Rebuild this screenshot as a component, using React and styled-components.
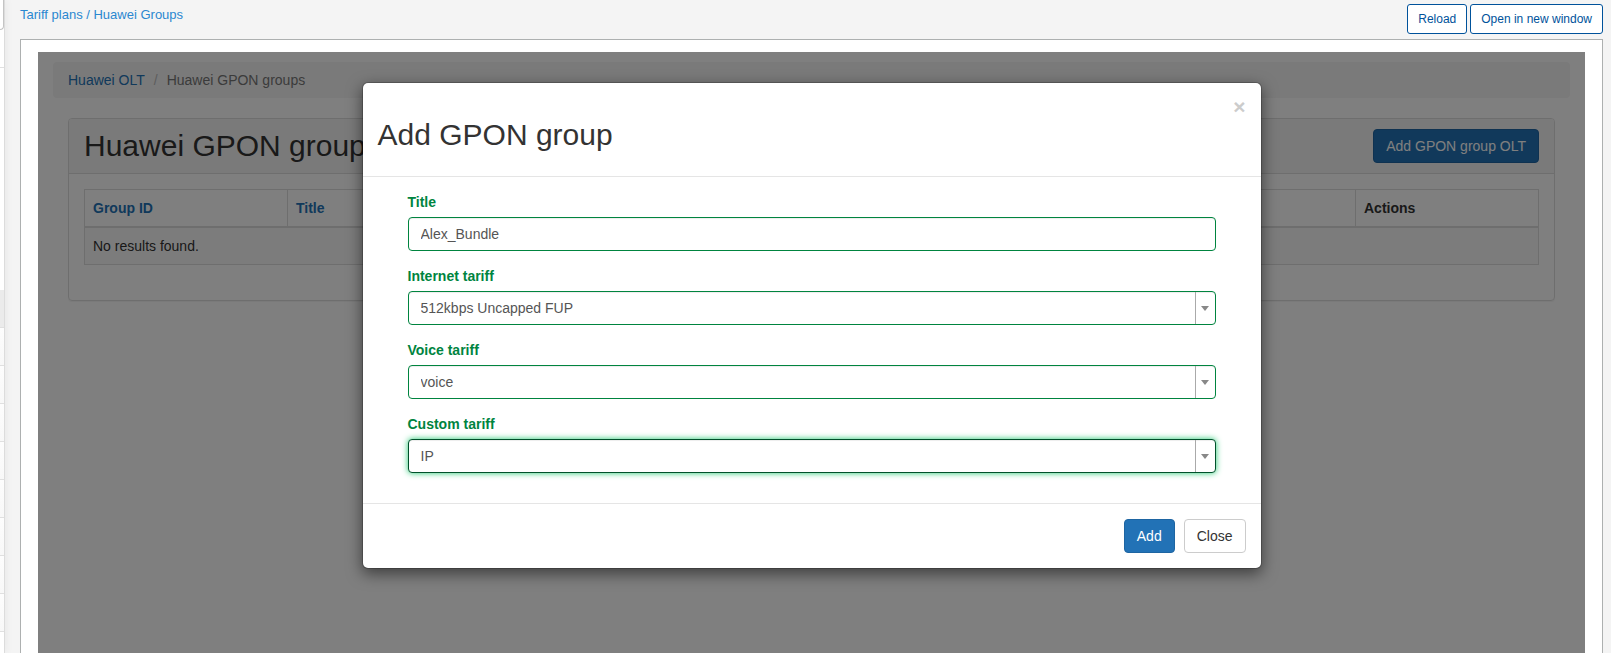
import React from "react";
import styled, { createGlobalStyle, css } from "styled-components";

const GlobalStyle = createGlobalStyle`
  *, *::before, *::after { box-sizing: border-box; }
  html, body { margin: 0; padding: 0; }
  body {
    background: #f4f4f4;
    color: #333;
    font-family: "Liberation Sans", Arial, sans-serif;
    font-size: 14px;
    line-height: 20px;
  }
  button, input, select { font-family: inherit; }
`;

const Shell = styled.div`
  display: flex;
  min-height: 100vh;
`;

const Sidebar = styled.aside`
  flex: none;
  width: 5px;
  overflow: hidden;
  background: #fff;
  border-right: 1px solid #dcdcdc;
  box-shadow: 0 0 8px rgba(0, 0, 0, 0.08);
`;

const SearchBox = styled.div`
  height: 30px;
  border: solid #c4c4c4;
  border-width: 0 1px 1px 0;
  border-radius: 0 0 4px 0;
`;

const SidebarSection = styled.div`
  height: ${(p) => p.$height}px;
  border-bottom: ${(p) => (p.$line ? "1px solid #e0e0e0" : "0")};
`;

const SidebarItem = styled.div`
  height: 38px;
  border-bottom: 1px solid #e0e0e0;
  background: ${(p) => (p.$active ? "#ebebeb" : "linear-gradient(#fdfdfd, #f8f8f8)")};
`;

const Main = styled.main`
  flex: 1;
  min-width: 0;
  display: flex;
  flex-direction: column;
  padding: 0 8px 0 15px;
`;

const TopBar = styled.header`
  display: flex;
  justify-content: space-between;
  padding: 4px 0 5px;
`;

const Trail = styled.nav`
  color: #2a87d0;
  font-size: 13px;
  line-height: 22px;
  a { color: inherit; text-decoration: none; }
`;

const TopActions = styled.div`
  display: flex;
  gap: 3px;
`;

const OutlineButton = styled.button`
  height: 30px;
  padding: 0 10px;
  border: 1px solid #00529b;
  border-radius: 3px;
  background: #fff;
  color: #00529b;
  font-size: 12px;
  line-height: 18px;
`;

const Frame = styled.section`
  flex: 1;
  display: flex;
  padding: 12px 17px 0;
  border: 1px solid #adb0b0;
  border-bottom: 0;
  background: #fff;
`;

const Stack = styled.div`
  flex: 1;
  min-width: 0;
  display: grid;
  grid-template-columns: minmax(0, 1fr);
  > * { grid-area: 1 / 1; }
`;

const Page = styled.div`
  padding: 10px 15px;
`;

const Breadcrumb = styled.ol`
  display: flex;
  margin: 0 0 20px;
  padding: 8px 15px;
  border-radius: 4px;
  background: #f5f5f5;
  color: #777;
  list-style: none;
  a { color: #2272b6; text-decoration: none; }
  li + li::before { content: "/"; padding: 0 9px; color: #bbb; }
`;

const Panel = styled.section`
  margin: 0 15px;
  border: 1px solid #ddd;
  border-radius: 4px;
  box-shadow: 0 1px 1px rgba(0, 0, 0, 0.05);
`;

const PanelHeader = styled.div`
  display: flex;
  align-items: flex-start;
  justify-content: space-between;
  padding: 10px 15px;
  border-bottom: 1px solid #ddd;
  border-radius: 3px 3px 0 0;
  background: #f5f5f5;
`;

const Heading = styled.h1`
  margin: 0;
  font-size: 30px;
  font-weight: 400;
  line-height: 33px;
`;

const PanelBody = styled.div`
  padding: 15px 15px 35px;
`;

const Button = styled.button`
  height: 34px;
  padding: 0 12px;
  border: 1px solid ${(p) => (p.$primary ? "#1e65a2" : "#ccc")};
  border-radius: 4px;
  background: ${(p) => (p.$primary ? "#2272b6" : "#fff")};
  color: ${(p) => (p.$primary ? "#fff" : "#333")};
  font-size: 14px;
  line-height: 20px;
`;

const Table = styled.table`
  width: 100%;
  border-collapse: collapse;
  table-layout: fixed;
  th, td { padding: 8px; border: 1px solid #ddd; text-align: left; }
  th { border-bottom-width: 2px; }
  th a { color: #2272b6; text-decoration: none; }
  td { background: #f9f9f9; }
`;

const Column = styled.col`
  width: ${(p) => p.$width};
`;

const Backdrop = styled.div`
  z-index: 1;
  background: rgba(0, 0, 0, 0.5);
`;

const Dialog = styled.form`
  max-width: 900px;
  margin: 30px auto;
  border: 1px solid rgba(0, 0, 0, 0.2);
  border-radius: 6px;
  background: #fff;
  background-clip: padding-box;
  box-shadow: 0 5px 15px rgba(0, 0, 0, 0.5);
`;

const DialogHeader = styled.div`
  display: flex;
  align-items: flex-start;
  justify-content: space-between;
  padding: 15px;
  border-bottom: 1px solid #e5e5e5;
`;

const DialogTitle = styled.h2`
  margin: 20px 0 10px;
  font-size: 30px;
  font-weight: 400;
  line-height: 33px;
`;

const CloseIcon = styled.button`
  margin-top: -2px;
  padding: 0;
  border: 0;
  background: none;
  color: #ccc;
  font-size: 21px;
  font-weight: 700;
  line-height: 21px;
`;

const DialogBody = styled.div`
  padding: 15px 45px;
`;

const Field = styled.div`
  margin-bottom: 15px;
`;

const Label = styled.label`
  display: block;
  margin-bottom: 5px;
  color: #00843f;
  font-weight: 700;
`;

const control = css`
  display: block;
  width: 100%;
  height: 34px;
  padding: 6px 12px;
  border: 1px solid #00843f;
  border-radius: 4px;
  outline: 0;
  background: #fff;
  color: #555;
  font-size: 14px;
  line-height: 20px;
  box-shadow: inset 0 1px 1px rgba(0, 0, 0, 0.075);
`;

const TextInput = styled.input`
  ${control}
`;

const SelectWrap = styled.div`
  position: relative;
`;

const Select = styled.select`
  ${control}
  appearance: none;
  ${(p) =>
    p.$active &&
    css`
      border-color: #00512b;
      box-shadow: inset 0 1px 1px rgba(0, 0, 0, 0.075), 0 0 6px #1ec86e;
    `}
`;

const Arrow = styled.span`
  position: absolute;
  top: 1px;
  right: 1px;
  bottom: 1px;
  width: 20px;
  display: flex;
  align-items: center;
  justify-content: center;
  border-left: 1px solid #aaa;
  pointer-events: none;
  &::after {
    content: "";
    border: solid transparent;
    border-width: 5px 4px 0;
    border-top-color: #888;
  }
`;

const DialogFooter = styled.div`
  display: flex;
  justify-content: flex-end;
  gap: 9px;
  padding: 15px;
  border-top: 1px solid #e5e5e5;
`;

const tariffs = [
  { id: "internet", label: "Internet tariff", value: "512kbps Uncapped FUP" },
  { id: "voice", label: "Voice tariff", value: "voice" },
  { id: "custom", label: "Custom tariff", value: "IP", active: true },
];

const menu = [true, false, false, false, false, false, false, false, false];

export default function App() {
  return (
    <>
      <GlobalStyle />
      <Shell>
        <Sidebar>
          <SearchBox />
          <SidebarSection $height={38} $line />
          <SidebarSection $height={222} />
          {menu.map((active, i) => (
            <SidebarItem key={i} $active={active} />
          ))}
        </Sidebar>
        <Main>
          <TopBar>
            <Trail>
              <a href="#plans">Tariff plans</a> / <a href="#groups">Huawei Groups</a>
            </Trail>
            <TopActions>
              <OutlineButton type="button">Reload</OutlineButton>
              <OutlineButton type="button">Open in new window</OutlineButton>
            </TopActions>
          </TopBar>
          <Frame>
            <Stack>
              <Page>
                <Breadcrumb>
                  <li><a href="#olt">Huawei OLT</a></li>
                  <li>Huawei GPON groups</li>
                </Breadcrumb>
                <Panel>
                  <PanelHeader>
                    <Heading>Huawei GPON groups</Heading>
                    <Button type="button" $primary>Add GPON group OLT</Button>
                  </PanelHeader>
                  <PanelBody>
                    <Table>
                      <colgroup>
                        <Column $width="203px" />
                        <Column />
                        <Column $width="183px" />
                      </colgroup>
                      <thead>
                        <tr>
                          <th><a href="#id">Group ID</a></th>
                          <th><a href="#title">Title</a></th>
                          <th>Actions</th>
                        </tr>
                      </thead>
                      <tbody>
                        <tr>
                          <td colSpan={3}>No results found.</td>
                        </tr>
                      </tbody>
                    </Table>
                  </PanelBody>
                </Panel>
              </Page>
              <Backdrop>
                <Dialog role="dialog" aria-labelledby="dialog-title">
                  <DialogHeader>
                    <DialogTitle id="dialog-title">Add GPON group</DialogTitle>
                    <CloseIcon type="button" aria-label="Close">×</CloseIcon>
                  </DialogHeader>
                  <DialogBody>
                    <Field>
                      <Label htmlFor="title">Title</Label>
                      <TextInput id="title" type="text" defaultValue="Alex_Bundle" />
                    </Field>
                    {tariffs.map((t) => (
                      <Field key={t.id}>
                        <Label htmlFor={t.id}>{t.label}</Label>
                        <SelectWrap>
                          <Select id={t.id} $active={t.active} defaultValue={t.value}>
                            <option>{t.value}</option>
                          </Select>
                          <Arrow />
                        </SelectWrap>
                      </Field>
                    ))}
                  </DialogBody>
                  <DialogFooter>
                    <Button type="button" $primary>Add</Button>
                    <Button type="button">Close</Button>
                  </DialogFooter>
                </Dialog>
              </Backdrop>
            </Stack>
          </Frame>
        </Main>
      </Shell>
    </>
  );
}
